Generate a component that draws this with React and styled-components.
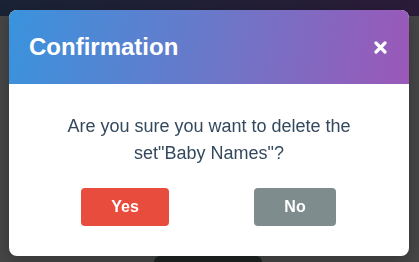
import React from "react";
import styled, { createGlobalStyle } from "styled-components";

const GlobalStyle = createGlobalStyle`
  html, body {
    margin: 0;
    padding: 0;
    background: #464646;
    font-family: "Liberation Sans", Arial, sans-serif;
  }
  * {
    box-sizing: border-box;
  }
`;

const Page = styled.div`
  height: 100vh;
  display: flex;
  flex-direction: column;
  background: #464646;
`;

const TopBar = styled.div`
  height: 16px;
  background: linear-gradient(90deg, #1a2335 0%, #231f37 60%, #2b1c3a 100%);
`;

const Filler = styled.div`
  flex: 1;
`;

const BottomTab = styled.div`
  height: 6px;
  width: 108px;
  margin-left: 154px;
  border-radius: 6px 6px 0 0;
  background: #1f2322;
`;

const Overlay = styled.div`
  position: fixed;
  inset: 0;
  padding: 10px 10px 0 9px;
  display: flex;
  justify-content: flex-start;
  align-items: flex-start;
`;

const Modal = styled.div`
  width: 400px;
  background: #ffffff;
  border-radius: 8px;
  overflow: hidden;
  box-shadow: 0 4px 16px rgba(0, 0, 0, 0.25);
`;

const Header = styled.div`
  height: 74px;
  padding: 0 22px 0 20px;
  display: flex;
  align-items: center;
  justify-content: space-between;
  background: linear-gradient(100deg, #3a93dd 0%, #6a78c9 50%, #9b58b8 100%);
`;

const Title = styled.h2`
  margin: 0;
  color: #ffffff;
  font-size: 24px;
  font-weight: 700;
  line-height: 1;
`;

const CloseButton = styled.button`
  border: none;
  background: none;
  padding: 0;
  display: flex;
  cursor: pointer;
`;

const Body = styled.div`
  padding: 29px 20px 30px;
  text-align: center;
`;

const Message = styled.p`
  margin: 0 0 21px;
  color: #34495e;
  font-size: 18px;
  line-height: 27px;
`;

const Actions = styled.div`
  display: flex;
  justify-content: center;
  gap: 85px;
  margin-left: -1px;
`;

const ActionButton = styled.button`
  height: 38px;
  min-width: ${(p) => (p.$variant === "danger" ? "88px" : "82px")};
  padding: 0 30px;
  border: none;
  border-radius: 4px;
  background: ${(p) => (p.$variant === "danger" ? "#e74c3c" : "#7f8c8d")};
  color: #ffffff;
  font-family: "Liberation Sans", Arial, sans-serif;
  font-size: 16px;
  font-weight: 700;
  cursor: pointer;
`;

const CloseIcon = () => (
  <svg width="13" height="13" viewBox="0 0 13 13">
    <path
      d="M2 2 L11 11 M11 2 L2 11"
      stroke="#ffffff"
      strokeWidth="3.2"
      strokeLinecap="round"
    />
  </svg>
);

const App = () => {
  return (
    <>
      <GlobalStyle />
      <Page>
        <TopBar />
        <Filler />
        <BottomTab />
      </Page>
      <Overlay>
        <Modal>
          <Header>
            <Title>Confirmation</Title>
            <CloseButton aria-label="Close">
              <CloseIcon />
            </CloseButton>
          </Header>
          <Body>
            <Message>
              Are you sure you want to delete the
              <br />
              set"Baby Names"?
            </Message>
            <Actions>
              <ActionButton $variant="danger">Yes</ActionButton>
              <ActionButton>No</ActionButton>
            </Actions>
          </Body>
        </Modal>
      </Overlay>
    </>
  );
};

export default App;
